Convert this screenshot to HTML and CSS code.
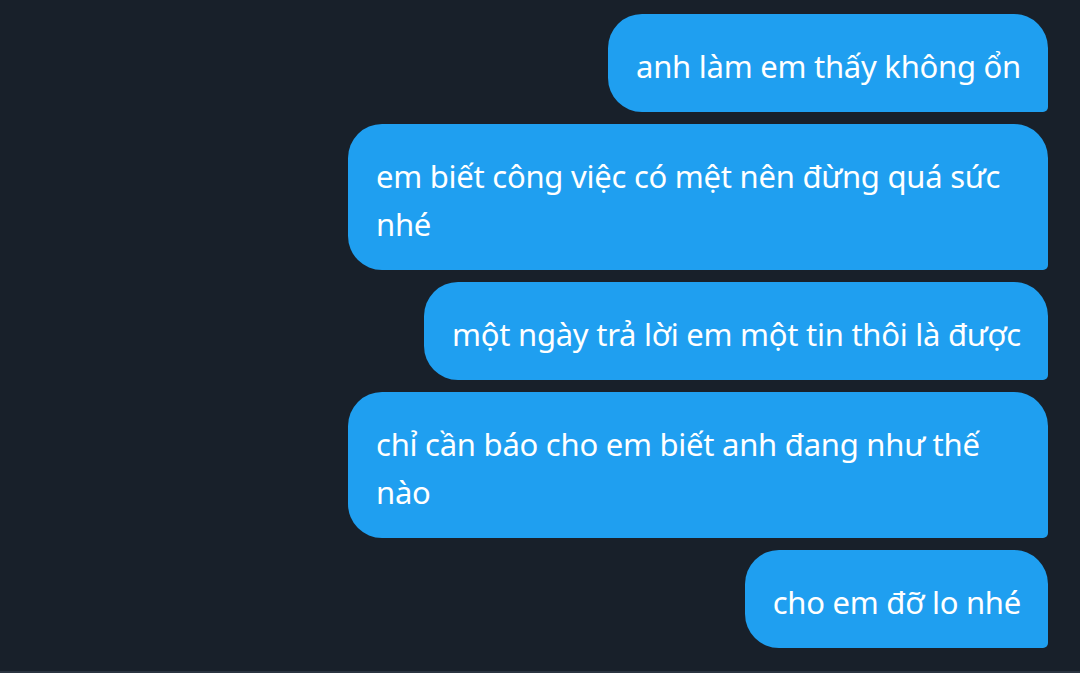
FILE: index.html
```html
<!DOCTYPE html>
<html lang="vi">
<head>
<meta charset="utf-8">
<link rel="stylesheet" href="styles.css">
</head>
<body>
<div class="chat">
  <div class="bubble">anh làm em thấy không ổn</div>
  <div class="bubble">em biết công việc có mệt nên đừng quá sức nhé</div>
  <div class="bubble">một ngày trả lời em một tin thôi là được</div>
  <div class="bubble">chỉ cần báo cho em biết anh đang như thế nào</div>
  <div class="bubble">cho em đỡ lo nhé</div>
</div>
</body>
</html>
```

FILE: styles.css
```css
html, body {
  margin: 0;
  padding: 0;
  background: #18202a;
}
body {
  width: 1080px;
  height: 673px;
  box-sizing: border-box;
  border-bottom: 2px solid #2a3440;
  overflow: hidden;
  font-family: "Noto Sans", "Open Sans", sans-serif;
}
.chat {
  display: flex;
  flex-direction: column;
  align-items: flex-end;
  gap: 12px;
  padding: 14px 32px 0 0;
}
.bubble {
  background: #1f9ff0;
  color: #ffffff;
  font-size: 31px;
  line-height: 48px;
  padding: 28px 27px 22px 28px;
  max-width: 645px;
  border-radius: 34px 34px 5px 34px;
  letter-spacing: -0.25px;
}
```
